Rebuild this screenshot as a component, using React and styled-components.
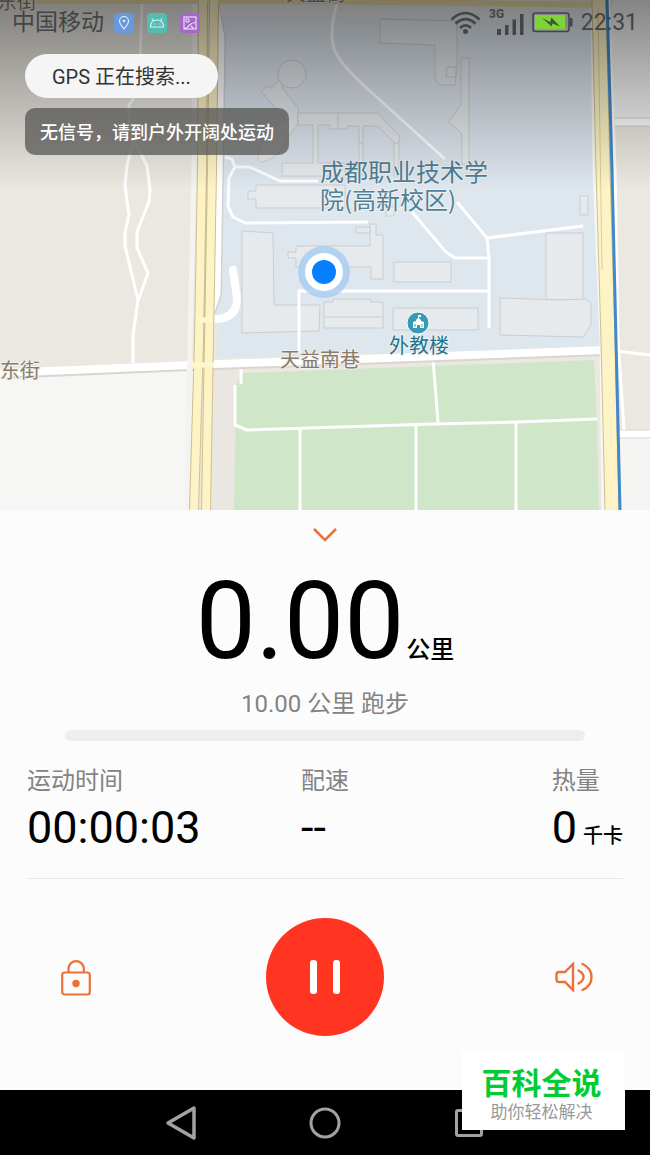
import React from 'react';
import styled, { createGlobalStyle } from 'styled-components';

const GlobalStyle = createGlobalStyle`
  * {
    box-sizing: border-box;
  }
  body {
    margin: 0;
    background: #fcfcfc;
    font-family: Roboto, "Noto Sans CJK SC", sans-serif;
  }
  button {
    border: 0;
    padding: 0;
    background: none;
    font: inherit;
    cursor: pointer;
  }
  svg {
    display: block;
  }
`;

const Screen = styled.div`
  position: relative;
  display: flex;
  flex-direction: column;
  min-height: 100vh;
`;

/* ---------- map ---------- */

const MapArea = styled.section`
  position: relative;
  min-height: 510px;
  overflow: hidden;
`;

const MapDrawing = styled.svg`
  position: absolute;
  inset: 0;
  width: 100%;
  height: 100%;
  text {
    font-family: "Noto Sans CJK SC", sans-serif;
    paint-order: stroke;
    stroke: #f0f1f1;
    stroke-width: 2px;
  }
`;

const MapOverlay = styled.div`
  position: relative;
  display: flex;
  flex-direction: column;
  align-items: flex-start;
`;

const StatusBar = styled.header`
  display: flex;
  align-items: center;
  align-self: stretch;
  justify-content: space-between;
  height: 44px;
  padding: 1px 12px 0;
  color: #434446;
`;

const StatusGroup = styled.div`
  display: flex;
  align-items: center;
  gap: ${props => props.$gap}px;
`;

const Carrier = styled.span`
  font-size: 23px;
  line-height: 24px;
`;

const Clock = styled.span`
  font-size: 23px;
  line-height: 24px;
`;

const GpsPill = styled.div`
  margin: 10px 0 0 25px;
  padding: 2px 27px 0;
  border-radius: 22px;
  background: #f5f5f5;
  color: #333;
  font-size: 20px;
  line-height: 42px;
`;

const Toast = styled.div`
  margin: 10px 0 0 25px;
  padding: 2px 15px 0;
  border-radius: 10px;
  background: rgba(86, 85, 83, 0.75);
  color: #fff;
  font-size: 18px;
  font-weight: 500;
  line-height: 45px;
`;

/* ---------- panel ---------- */

const Panel = styled.main`
  display: flex;
  flex: 1;
  flex-direction: column;
  background: #fcfcfc;
`;

const Collapse = styled.button`
  display: flex;
  align-items: center;
  justify-content: center;
  align-self: center;
  width: 60px;
  height: 50px;
`;

const Distance = styled.div`
  display: flex;
  align-items: baseline;
  justify-content: center;
  gap: 2px;
  height: 124px;
  color: #000;
`;

const DistanceValue = styled.span`
  font-size: 107px;
  line-height: 124px;
`;

const Unit = styled.span`
  font-size: ${props => props.$size}px;
  font-weight: 500;
`;

const Goal = styled.p`
  margin: 4px 0 10px;
  color: #838383;
  font-size: 24px;
  line-height: 32px;
  text-align: center;
`;

const Progress = styled.div`
  height: 11px;
  margin: 0 65px;
  border-radius: 6px;
  background: #eee;
`;

const Stats = styled.dl`
  display: grid;
  grid-template-columns: 1fr auto 1fr;
  margin: 24px 27px 0;
  padding-bottom: 14px;
  border-bottom: 1px solid #e6e6e6;
`;

const Stat = styled.div`
  justify-self: ${props => (props.$end ? 'end' : 'start')};
`;

const StatLabel = styled.dt`
  color: #838383;
  font-size: 24px;
  line-height: 32px;
`;

const StatValue = styled.dd`
  display: flex;
  align-items: baseline;
  gap: 6px;
  margin: 3px 0 0;
  color: #000;
  font-size: 45px;
  line-height: 55px;
`;

const Controls = styled.div`
  display: flex;
  align-items: center;
  justify-content: space-between;
  padding: 39px 54px 54px;
`;

const IconButton = styled.button`
  display: flex;
  align-items: center;
  justify-content: center;
  width: 44px;
  height: 44px;
`;

const PauseButton = styled.button`
  display: flex;
  align-items: center;
  justify-content: center;
  width: 118px;
  height: 118px;
  border-radius: 50%;
  background: #ff3421;
`;

const NavBar = styled.nav`
  display: flex;
  align-items: center;
  justify-content: center;
  gap: 100px;
  height: 65px;
  background: #000;
`;

const Badge = styled.aside`
  position: absolute;
  right: 25px;
  bottom: 25px;
  width: 163px;
  height: 80px;
  padding: 14px 4px 0 0;
  background: #fff;
  text-align: center;
`;

const BadgeTitle = styled.div`
  color: #0c3;
  font-size: 30px;
  font-weight: 700;
  line-height: 40px;
`;

const BadgeText = styled.div`
  color: #999;
  font-size: 17px;
  line-height: 17px;
`;

const buildings = [
  'M380 19L457 21V66L455 85H439L435 79V45L380 43Z',
  'M447 67H456V77H446Z',
  'M461 58H469V164H462V134L449 122L461 104Z',
  'M261 91L267 86L271 88L280 80L284 90L298 108V125L293 130C284 142 281 158 262 162C255 162 258 150 263 140L284 119Z',
  'M298 113H378L400 137L399 143V176H394V142L378 126H363V175H359V126H347V129H330V125H318V163H345V176H282V163H313V125H298Z',
  'M338 113V129M359 143H363M394 143H399',
  'M248 191H256V185H345V208H256V199H248Z',
  'M242 231L273 233L274 305H320L319 331L242 333Z',
  'M288 252H296V246H370V224H376V235H383V279H371V267H296V258H288Z',
  'M356 227H370V233H356Z',
  'M394 262H451V282H394Z',
  'M324 302H333V299H371V302H383V328H324Z',
  'M324 317H383',
  'M393 308H478V330H393Z',
  'M546 233H583V300H546Z',
  'M500 298L560 300L586 299L591 304V325L583 337L500 335Z',
  'M580 196H588V215H580Z',
  'M386 207H394V216H386Z',
];

const campusPaths = [
  'M337 4C331 22 330 42 336 53C342 65 353 75 360 82L445 159M457 202L487 238L489 258V328',
  'M412 212L446 252L455 258H489',
  'M487 238L583 226',
  'M225 157L232 159L235 167L250 167L280 181H318M235 167L229 178L228 206L233 217L245 223L368 222',
  'M299 353V291H489',
];

function CampusMap() {
  return (
    <MapDrawing viewBox="0 0 650 510" preserveAspectRatio="xMidYMid slice" aria-hidden="true">
      <defs>
        <linearGradient id="shade" x1="0" y1="0" x2="0" y2="1">
          <stop offset="0" stopColor="#000" stopOpacity=".46" />
          <stop offset=".5" stopColor="#000" stopOpacity=".22" />
          <stop offset="1" stopColor="#000" stopOpacity="0" />
        </linearGradient>
      </defs>
      <rect width="650" height="510" fill="#ebe8e1" />
      <path d="M0 375L194 366L189 510H0Z" fill="#f6f6f5" />
      <path d="M612 0H650V120H612ZM618 434H650V510H620Z" fill="#f5f5f4" />
      <path d="M219 6L594 8L600 348L217 358Z" fill="#dee6ee" />
      <path d="M219 6H590V20L219 16Z" fill="#e8e9e9" />
      <path d="M215 370L236 369L234 510H211Z" fill="#eae6e1" />
      <path d="M244 373L594 360L597 420L599 510H234L236 383Z" fill="#cfe7c8" />

      <g fill="#e6eaed" stroke="#cbced1" strokeWidth="1">
        {buildings.map(d => (
          <path key={d} d={d} />
        ))}
        <circle cx="292" cy="74" r="14" />
      </g>

      {/* footpaths */}
      <g fill="none" stroke="#fff" strokeWidth="3" strokeLinejoin="round">
        {campusPaths.map(d => (
          <path key={d} d={d} />
        ))}
        <path d="M142 4L139 90L129 105V120L134 140L127 165L125 185L129 215L125 232V246L138 300L133 335L133 367" />
        <path d="M134 140L147 166L150 190L149 202L137 232V248L148 273L138 301" />
        <path d="M241 365V384M235 385V425L247 430L433 424L517 422L597 419M433 359L438 422M300 428V510" />
        <path d="M416 425V510M516 422V510" />
        <path d="M616 351L650 355" />
      </g>

      {/* streets */}
      <g fill="none">
        <path d="M0 374L190 366L604 351" stroke="#d9d6cf" strokeWidth="10" />
        <path d="M0 373L190 365L604 350" stroke="#fff" strokeWidth="8" />
        <path d="M610 122H650M616 434H650" stroke="#d6d5d1" strokeWidth="9" />
        <path d="M610 122H650M616 434H650" stroke="#fff" strokeWidth="7" />
        <path d="M195 4L194 170L190 340L187 510" stroke="#f4f3f0" strokeWidth="5" />
        <path d="M215 4L222 38L220 170L218 294L212 312" stroke="#cfd2d4" strokeWidth="8" />
        <path d="M215 4L221 38L219 170L217 294L211 312" stroke="#fff" strokeWidth="7" />
        <path d="M233 270L237 298Q237 319 215 319H202" stroke="#fff" strokeWidth="8" strokeLinecap="round" />
        <path d="M0 1L320 1L600 5" stroke="#eadca3" strokeWidth="6" />
        <path d="M203 4L202 170L199 340L194 510M214 4L212 170L209 340L206 510" stroke="#cdbf93" strokeWidth="10" />
        <path d="M203 0L202 170L199 340L194 510M214 0L212 170L209 340L206 510" stroke="#fdf3c4" strokeWidth="8" />
        <path d="M197 320H212M192 365H214" stroke="#fff8cf" strokeWidth="5" />
        <path d="M593 8L595 170L602 340L604 510" stroke="#f8f7f2" strokeWidth="5" />
        <path d="M599 0L603 170L608 340L612 510" stroke="#cdbf93" strokeWidth="15" />
        <path d="M599 0L603 170L608 340L612 510" stroke="#fdf3c4" strokeWidth="13" />
        <path d="M598 8L602 270" stroke="#dccf9d" strokeWidth="1" />
        <path d="M609 0L615 170L618 340L624 430" stroke="#fff" strokeWidth="3" />
        <path d="M607 0L612 170L616 340L620 510" stroke="#4389ca" strokeWidth="3" />
      </g>

      <g fill="#8c7b67" fontSize="20">
        <text x="-3" y="9">东街</text>
        <text x="286" y="1">天益街</text>
        <text x="0" y="378">东街</text>
        <text x="280" y="367">天益南巷</text>
      </g>
      <g fill="#4f7f97" fontSize="24">
        <text x="320" y="181">成都职业技术学</text>
        <text x="320" y="209">院(高新校区)</text>
      </g>
      <text x="389" y="353" fill="#1f7490" fontSize="20">外教楼</text>

      <circle cx="418" cy="323" r="11" fill="#389bb5" stroke="#fff" strokeWidth="1" />
      <path d="M413 328V322L416 321V320L418 318V315H421V317H419V318L421 320V321L424 322V328H420V325H417V328Z" fill="#fff" />
      <path d="M415 324V327M422 324V327" stroke="#389bb5" strokeWidth="1" />

      <circle cx="324" cy="272" r="26" fill="#a9cdf1" fillOpacity=".85" />
      <circle cx="324" cy="272" r="19" fill="#fff" />
      <circle cx="324" cy="272" r="12" fill="#087fff" />

      <rect width="650" height="190" fill="url(#shade)" />
    </MapDrawing>
  );
}

function AppIcon({ color, children }) {
  return (
    <svg width="20" height="20" viewBox="0 0 20 20" fill="none" stroke="#e8eef5" strokeWidth="1.1">
      <rect width="20" height="20" rx="4" fill={color} stroke="none" />
      {children}
    </svg>
  );
}

function Notifications() {
  return (
    <StatusGroup $gap={13}>
      <AppIcon color="#6a98dc">
        <path d="M10 16C7 12.500 5.500 10.500 5.500 8A4.500 4.500 0 0 1 14.500 8C14.500 10.500 13 12.500 10 16Z" />
        <circle cx="10" cy="8" r=".8" />
      </AppIcon>
      <AppIcon color="#52bdb2">
        <path d="M3.500 14C3.500 9 6 7 10 7S16.500 9 16.500 14ZM5 5.500L6.500 8M15 5.500L13.500 8M7 10.500V11.500M13 10.500V11.500" />
      </AppIcon>
      <AppIcon color="#a565cb">
        <rect x="4" y="4" width="12" height="12" />
        <circle cx="7.500" cy="7.500" r="1.700" />
        <path d="M4.500 15.500C8 15 8 13.500 9.500 12S12 9.500 15.500 9.500M11 13L13.500 15.500" />
      </AppIcon>
    </StatusGroup>
  );
}

function WifiIcon() {
  return (
    <svg width="31" height="24" viewBox="0 0 31 24" fill="none" stroke="currentColor" strokeWidth="2.600">
      <path d="M1.500 8.500Q15.500 -4.500 29.500 8.500M5.500 12.800Q15.500 3.500 25.500 12.800M10 17Q15.500 11.800 21 17" />
      <circle cx="15.500" cy="20.500" r="2.500" fill="currentColor" stroke="none" />
    </svg>
  );
}

function SignalIcon() {
  return (
    <svg width="35" height="28" viewBox="0 0 35 28" fill="currentColor">
      <text x="0" y="9" fontSize="12" fontWeight="700">3G</text>
      <path d="M8 20H12V26H8ZM16 16H19.500V26H16ZM23.500 10.500H27V26H23.500ZM31 5H34.500V26H31Z" />
    </svg>
  );
}

function BatteryIcon() {
  return (
    <svg width="41" height="21" viewBox="0 0 41 21">
      <rect x="1" y="1" width="36" height="18.500" rx="2.500" fill="none" stroke="currentColor" strokeWidth="1.600" />
      <path d="M38 6H40.500V14.500H38Z" fill="currentColor" />
      <rect x="3" y="3" width="30" height="14.500" fill="#7ed33b" />
      <path d="M10 6L18 10L19.500 5.500L28 14.500L20.500 11.500L19.500 14.500Z" fill="#3f5a32" />
    </svg>
  );
}

export default function App() {
  return (
    <>
      <GlobalStyle />
      <Screen>
        <MapArea>
          <CampusMap />
          <MapOverlay>
            <StatusBar>
              <StatusGroup $gap={10}>
                <Carrier>中国移动</Carrier>
                <Notifications />
              </StatusGroup>
              <StatusGroup $gap={8}>
                <WifiIcon />
                <SignalIcon />
                <BatteryIcon />
                <Clock>22:31</Clock>
              </StatusGroup>
            </StatusBar>
            <GpsPill>GPS 正在搜索...</GpsPill>
            <Toast role="status">无信号，请到户外开阔处运动</Toast>
          </MapOverlay>
        </MapArea>

        <Panel>
          <Collapse aria-label="收起">
            <svg width="24" height="14" viewBox="0 0 24 14" fill="none" stroke="#ec7038" strokeWidth="2.500">
              <path d="M1 1L12 12L23 1" />
            </svg>
          </Collapse>
          <Distance>
            <DistanceValue>0.00</DistanceValue>
            <Unit $size={24}>公里</Unit>
          </Distance>
          <Goal>10.00 公里 跑步</Goal>
          <Progress role="progressbar" aria-valuenow={0} aria-label="进度" />

          <Stats>
            <Stat>
              <StatLabel>运动时间</StatLabel>
              <StatValue>00:00:03</StatValue>
            </Stat>
            <Stat>
              <StatLabel>配速</StatLabel>
              <StatValue>--</StatValue>
            </Stat>
            <Stat $end>
              <StatLabel>热量</StatLabel>
              <StatValue>
                0<Unit $size={20}>千卡</Unit>
              </StatValue>
            </Stat>
          </Stats>

          <Controls>
            <IconButton aria-label="锁定">
              <svg width="30" height="38" viewBox="0 0 30 38" fill="none" stroke="#ec7038" strokeWidth="2.200">
                <rect x="1.200" y="14.500" width="27.600" height="22" rx="2.500" />
                <path d="M7.500 14.500V10A7.700 7.700 0 0 1 22.800 10V14.500" />
                <circle cx="15" cy="25.500" r="3.700" fill="#ec7038" stroke="none" />
              </svg>
            </IconButton>
            <PauseButton aria-label="暂停">
              <svg width="30" height="34" viewBox="0 0 30 34" fill="#fff">
                <rect width="7" height="34" rx="3" />
                <rect x="23" width="7" height="34" rx="3" />
              </svg>
            </PauseButton>
            <IconButton aria-label="声音">
              <svg width="38" height="30" viewBox="0 0 38 30" fill="none" stroke="#ec7038" strokeWidth="2.400" strokeLinecap="round">
                <path d="M18 2V28L10 20H4Q1.500 20 1.500 17.500V12.500Q1.500 10 4 10H10Z" />
                <path d="M23.500 8.500Q28.500 11 28.500 15T23.500 21.500M27.500 2Q36.500 6 36.500 15T27.500 28" />
              </svg>
            </IconButton>
          </Controls>
        </Panel>

        <NavBar>
          <IconButton aria-label="返回">
            <svg width="32" height="36" viewBox="0 0 32 36" fill="none" stroke="#a2a2a2" strokeWidth="3.500" strokeLinejoin="round">
              <path d="M29 3V33L3 18Z" />
            </svg>
          </IconButton>
          <IconButton aria-label="主页">
            <svg width="32" height="32" viewBox="0 0 32 32" fill="none" stroke="#a2a2a2" strokeWidth="3">
              <circle cx="16" cy="16" r="14" />
            </svg>
          </IconButton>
          <IconButton aria-label="最近任务">
            <svg width="28" height="28" viewBox="0 0 28 28" fill="none" stroke="#a2a2a2" strokeWidth="3">
              <rect x="1.500" y="1.500" width="25" height="25" rx="1.500" />
            </svg>
          </IconButton>
        </NavBar>

        <Badge>
          <BadgeTitle>百科全说</BadgeTitle>
          <BadgeText>助你轻松解决</BadgeText>
        </Badge>
      </Screen>
    </>
  );
}
